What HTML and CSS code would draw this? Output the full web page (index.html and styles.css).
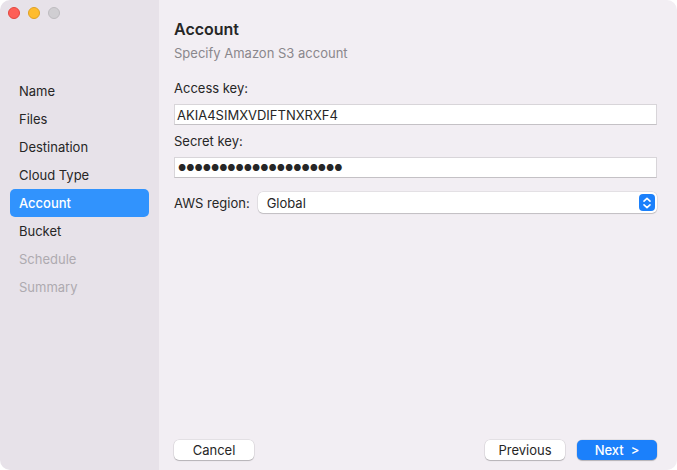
FILE: index.html
```html
<!DOCTYPE html>
<html lang="en">
<head>
  <meta charset="UTF-8" />
  <title>Account</title>
  <link rel="stylesheet" href="styles.css">
</head>
<body>
  <div class="window">
    <aside class="sidebar">
      <div class="lights">
        <span class="light red"></span>
        <span class="light yellow"></span>
        <span class="light gray"></span>
      </div>
      <ul class="steps">
        <li>Name</li>
        <li>Files</li>
        <li>Destination</li>
        <li>Cloud Type</li>
        <li class="active">Account</li>
        <li>Bucket</li>
        <li class="disabled">Schedule</li>
        <li class="disabled">Summary</li>
      </ul>
    </aside>

    <main class="content">
      <h1>Account</h1>
      <p class="subtitle">Specify Amazon S3 account</p>

      <label class="field-label">Access key:</label>
      <div class="input">AKIA4SIMXVDIFTNXRXF4</div>

      <label class="field-label">Secret key:</label>
      <div class="input secret">&#9679;&#9679;&#9679;&#9679;&#9679;&#9679;&#9679;&#9679;&#9679;&#9679;&#9679;&#9679;&#9679;&#9679;&#9679;&#9679;&#9679;&#9679;&#9679;&#9679;</div>

      <div class="region-row">
        <span>AWS region:</span>
        <div class="select">
          <span>Global</span>
          <span class="stepper">
            <svg width="10" height="14" viewBox="0 0 10 14">
              <path d="M2 5.2 L5 2.4 L8 5.2 M2 8.8 L5 11.6 L8 8.8" fill="none" stroke="white" stroke-width="1.6" stroke-linecap="round" stroke-linejoin="round"/>
            </svg>
          </span>
        </div>
      </div>

      <div class="spacer"></div>

      <footer class="buttons">
        <button class="btn">Cancel</button>
        <div class="right">
          <button class="btn">Previous</button>
          <button class="btn primary">Next &nbsp;&gt;</button>
        </div>
      </footer>
    </main>
  </div>
</body>
</html>
```

FILE: styles.css
```css
:root {
  --sidebar: #e7e2e9;
  --pane: #f2eef3;
  --text: #262626;
  --muted: #8a878c;
  --disabled: #aeaab0;
  --blue: #3193fd;
  --blue-btn: #1b80fb;
}

body {
  margin: 0;
  background: #ffffff;
  font-family: Inter, "Noto Sans", sans-serif;
  font-size: 13px;
  color: var(--text);
}

.window {
  display: flex;
  width: 677px;
  height: 470px;
  border-radius: 10px;
  overflow: hidden;
}

.sidebar {
  width: 159px;
  background: var(--sidebar);
  padding: 0 10px;
  box-sizing: border-box;
  flex-shrink: 0;
}

.lights {
  display: flex;
  gap: 8px;
  padding-top: 7px;
  margin-left: -2px;
}

.light {
  width: 12px;
  height: 12px;
  border-radius: 50%;
  box-sizing: border-box;
}

.light.red { background: #fe5f57; border: 0.5px solid #e2463f; }
.light.yellow { background: #febc2e; border: 0.5px solid #dfa123; }
.light.gray { background: #d0ced2; border: 0.5px solid #bdbbbf; }

.steps {
  list-style: none;
  margin: 58px 0 0;
  padding: 0;
}

.steps li {
  height: 28px;
  line-height: 28px;
  padding-left: 9px;
  border-radius: 5px;
  color: var(--text);
}

.steps li.active {
  background: var(--blue);
  color: #ffffff;
  font-weight: 500;
}

.steps li.disabled {
  color: var(--disabled);
}

.content {
  flex: 1;
  background: var(--pane);
  display: flex;
  flex-direction: column;
  padding: 0 20px 10px 15px;
}

.content h1 {
  margin: 19px 0 0;
  font-size: 16px;
  font-weight: 600;
  line-height: 20px;
}

.subtitle {
  margin: 5px 0 0;
  color: var(--muted);
  line-height: 18px;
}

.field-label {
  display: block;
  margin-top: 17px;
  line-height: 18px;
}

.input {
  margin-top: 7px;
  height: 21px;
  line-height: 21px;
  background: #ffffff;
  border: 1px solid #d8d5d9;
  border-bottom-color: #c4c1c5;
  padding: 0 2px;
  box-sizing: border-box;
}

.input + .field-label {
  margin-top: 7px;
}

.input.secret {
  font-size: 9px;
  line-height: 20px;
  padding-left: 3px;
}

.region-row {
  display: flex;
  align-items: center;
  gap: 8px;
  margin-top: 14px;
}

.select {
  flex: 1;
  display: flex;
  justify-content: space-between;
  align-items: center;
  height: 21px;
  background: #ffffff;
  border-radius: 5px;
  box-shadow: 0 0 0 0.5px rgba(0, 0, 0, 0.12), 0 1px 1px rgba(0, 0, 0, 0.15);
  padding: 0 2px 0 9px;
}

.stepper {
  width: 16px;
  height: 17px;
  border-radius: 4px;
  background: var(--blue-btn);
  display: flex;
  align-items: center;
  justify-content: center;
}

.spacer {
  flex: 1;
}

.buttons {
  display: flex;
  justify-content: space-between;
}

.buttons .right {
  display: flex;
  gap: 12px;
}

.btn {
  width: 80px;
  height: 20px;
  border: none;
  border-radius: 5px;
  background: #ffffff;
  box-shadow: 0 0 0 0.5px rgba(0, 0, 0, 0.12), 0 1px 1px rgba(0, 0, 0, 0.2);
  font-family: inherit;
  font-size: 13px;
  color: var(--text);
  padding: 0;
}

.btn.primary {
  background: var(--blue-btn);
  color: #ffffff;
  font-weight: 500;
}
```
